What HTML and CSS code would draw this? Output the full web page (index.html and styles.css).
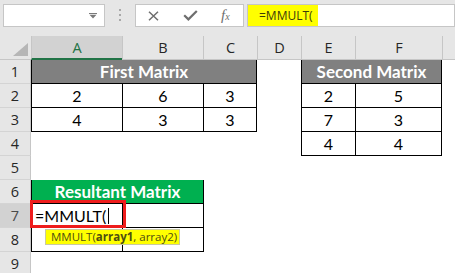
FILE: index.html
```html
<!DOCTYPE html>
<html>
<head>
<meta charset="utf-8">
<link rel="stylesheet" href="styles.css">
</head>
<body>
<div class="toolbar">
  <div class="namebox">
    <svg class="dd" width="8" height="6" viewBox="0 0 8 6"><path d="M0 0h8v1H0z M0.5 1.8h7L4 5.5z" fill="#7a7a7a"/></svg>
  </div>
  <div class="grip"><i></i><i></i><i></i></div>
  <div class="fxbox">
    <svg class="ic-x" width="11" height="10" viewBox="0 0 11 10"><path d="M1 0.8L10 9.2M10 0.8L1 9.2" stroke="#6e6e6e" stroke-width="1.5"/></svg>
    <svg class="ic-check" width="15" height="11" viewBox="0 0 15 11"><path d="M1.2 5.2l4.2 4.2L13.8 1" stroke="#6e6e6e" stroke-width="2.2" fill="none"/></svg>
    <span class="fx">f<span class="fx-x">x</span></span>
  </div>
  <div class="formula"><span class="hl">=MMULT(</span></div>
</div>
<div class="sheet">
  <div class="corner"><svg width="15" height="13" viewBox="0 0 15 13"><path d="M15 0V13H0z" fill="#b6b6b6"/></svg></div>
  <div class="ch sel">A</div>
  <div class="ch">B</div>
  <div class="ch">C</div>
  <div class="ch">D</div>
  <div class="ch">E</div>
  <div class="ch">F</div>
  <div class="ch"></div>

  <div class="rh r1">1</div>
  <div class="rh r2">2</div>
  <div class="rh r3">3</div>
  <div class="rh r4">4</div>
  <div class="rh r5">5</div>
  <div class="rh r6">6</div>
  <div class="rh r7 rsel">7</div>
  <div class="rh r8">8</div>
  <div class="rh r9">9</div>

  <div class="mat m1">
    <div class="c hd">First Matrix</div>
    <div class="c">2</div><div class="c">6</div><div class="c">3</div>
    <div class="c">4</div><div class="c">3</div><div class="c">3</div>
  </div>

  <div class="mat m2">
    <div class="c hd">Second Matrix</div>
    <div class="c">2</div><div class="c">5</div>
    <div class="c">7</div><div class="c">3</div>
    <div class="c">4</div><div class="c">4</div>
  </div>

  <div class="mat m3">
    <div class="c hd green">Resultant Matrix</div>
    <div class="c edit">=MMULT(<span class="caret"></span></div><div class="c"></div>
    <div class="c"></div><div class="c"></div>
    <div class="redbox"></div>
    <div class="tip">MMULT(<b>array1</b>, array2)</div>
  </div>
</div>
</body>
</html>
```

FILE: styles.css
```css
* {
  box-sizing: border-box;
  margin: 0;
  padding: 0;
}

body {
  width: 455px;
  height: 273px;
  overflow: hidden;
  background: #ffffff;
  font-family: "Open Sans", "DejaVu Sans", sans-serif;
}

.toolbar {
  height: 36px;
  background: #e6e6e6;
  display: flex;
  align-items: flex-start;
  padding-top: 4px;
}

.namebox {
  margin-left: 3px;
  width: 102px;
  height: 23px;
  border: 1px solid #c6c6c6;
  background: #ffffff;
  display: flex;
  align-items: center;
  justify-content: flex-end;
  padding-right: 7px;
}

.grip {
  width: 30px;
  display: flex;
  flex-direction: column;
  align-items: center;
  gap: 3px;
  padding-top: 5px;
}

.grip i {
  display: block;
  width: 2px;
  height: 2px;
  background: #a8a8a8;
}

.fxbox {
  width: 109px;
  height: 23px;
  border: 1px solid #c6c6c6;
  background: #ffffff;
  display: flex;
  align-items: center;
  padding-left: 12px;
}

.ic-check {
  margin-left: 24px;
}

.fx {
  margin-left: 23px;
  font-family: "Liberation Serif", "DejaVu Serif", serif;
  font-style: italic;
  font-size: 15px;
  color: #6e6e6e;
  line-height: 1;
}

.fx-x {
  font-size: 10px;
}

.formula {
  margin-left: 3px;
  width: 208px;
  height: 23px;
  border: 1px solid #c6c6c6;
  background: #ffffff;
}

.hl {
  display: block;
  width: 70px;
  height: 21px;
  background: #ffff00;
  padding-left: 11px;
  font-size: 12px;
  line-height: 21px;
  color: #3d3d0a;
}

.sheet {
  display: grid;
  grid-template-columns: 31px 91px 81px 54px 44px 54px 87px 13px;
  grid-template-rows: repeat(10, 24px);
}

.corner {
  background: #e6e6e6;
  border-bottom: 1px solid #c6c6c6;
  display: flex;
  align-items: flex-end;
  justify-content: flex-end;
  padding: 0 3px 3px 0;
}

.ch {
  background: #e6e6e6;
  border-left: 1px solid #c6c6c6;
  border-bottom: 1px solid #c6c6c6;
  text-align: center;
  font-size: 14.5px;
  line-height: 23px;
  color: #262626;
}

.ch.sel {
  background: #d2d2d2;
  color: #217346;
  border-bottom: 2px solid #217346;
}

.rh {
  grid-column: 1;
  background: #e6e6e6;
  border-right: 1px solid #c6c6c6;
  border-bottom: 1px solid #d4d4d4;
  text-align: center;
  font-size: 14.5px;
  line-height: 23px;
  color: #262626;
}

.rh.rsel {
  background: #d2d2d2;
  color: #4a4a4a;
}

.r1 { grid-row: 2; }
.r2 { grid-row: 3; }
.r3 { grid-row: 4; }
.r4 { grid-row: 5; }
.r5 { grid-row: 6; }
.r6 { grid-row: 7; }
.r7 { grid-row: 8; }
.r8 { grid-row: 9; }
.r9 { grid-row: 10; }

.mat {
  display: grid;
  gap: 1px;
  background: #000000;
  border: 1px solid #000000;
  border-top: 0;
  align-self: start;
}

.m1 {
  grid-column: 2 / 5;
  grid-row: 2 / 5;
  grid-template-columns: 90px 80px 52px;
  grid-template-rows: 23px 23px 23px;
}

.m2 {
  grid-column: 6 / 8;
  grid-row: 2 / 6;
  grid-template-columns: 53px 85px;
  grid-template-rows: 23px 23px 23px 23px;
}

.m3 {
  grid-column: 2 / 4;
  grid-row: 7 / 10;
  width: 173px;
  grid-template-columns: 90px 80px;
  grid-template-rows: 23px 23px 23px;
  position: relative;
}

.c {
  background: #ffffff;
  text-align: center;
  font-family: Lato, "Open Sans", sans-serif;
  font-size: 16px;
  line-height: 23px;
  color: #000000;
}

.hd {
  grid-column: 1 / -1;
  background: #808080;
  color: #ffffff;
  font-weight: bold;
  font-size: 17px;
}

.hd.green {
  background: #00b050;
}

.edit {
  text-align: left;
  padding-left: 3px;
  font-size: 16px;
  display: flex;
  align-items: center;
}

.caret {
  display: inline-block;
  width: 1px;
  height: 16px;
  background: #000000;
  margin-left: 2px;
}

.redbox {
  position: absolute;
  left: -2px;
  top: 20px;
  width: 96px;
  height: 28px;
  border: 3px solid #ee1c1c;
}

.tip {
  position: absolute;
  left: 13px;
  top: 49px;
  width: 135px;
  height: 16px;
  background: #ffff00;
  border: 1px solid #c9c9a0;
  font-family: "Open Sans", "DejaVu Sans", sans-serif;
  font-size: 11.5px;
  line-height: 14px;
  padding-left: 5px;
  color: #4e4e12;
  white-space: nowrap;
}
```
